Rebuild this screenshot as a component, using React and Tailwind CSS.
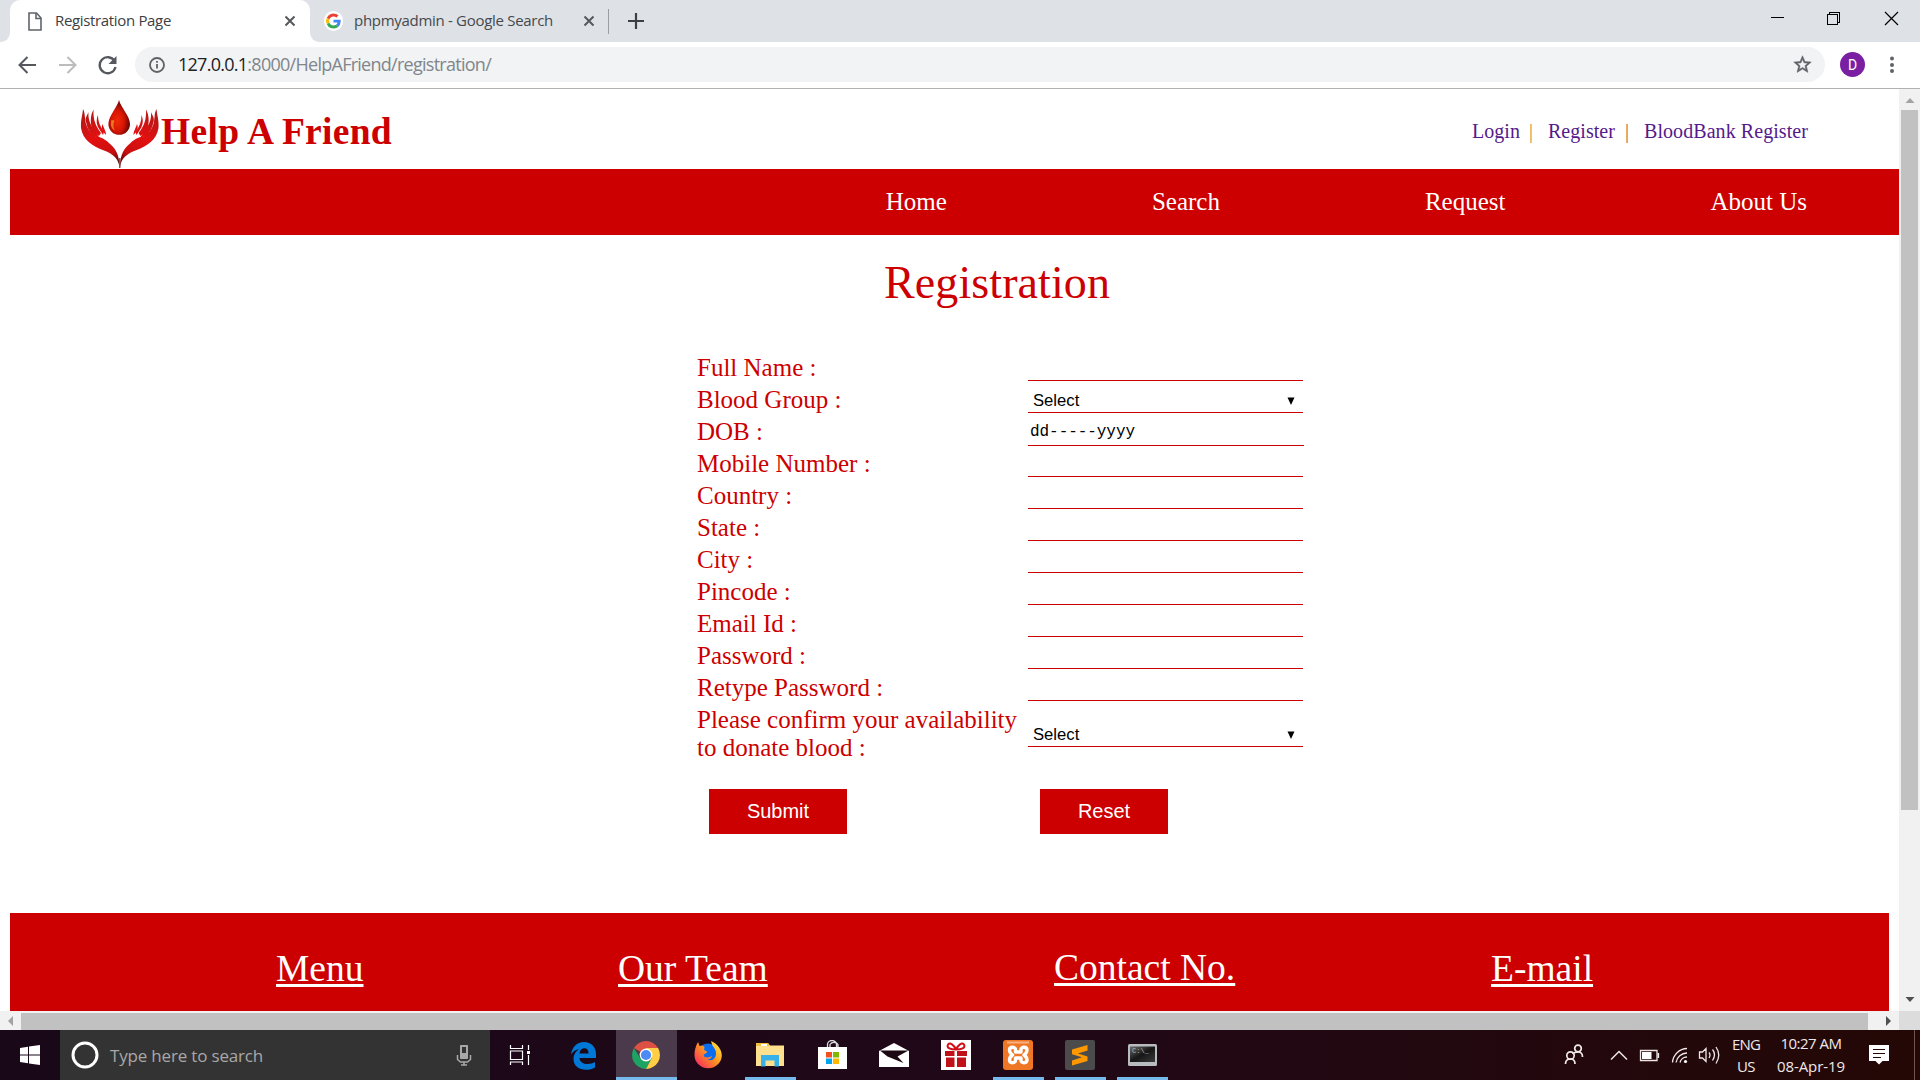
import React from "react";

const RED = "text-[#cc0000]";

function T({ children, w, className = "" }) {
  const ref = React.useRef(null);
  const [ls, setLs] = React.useState(0);
  React.useLayoutEffect(() => {
    const n = ref.current.textContent.length;
    setLs((w - ref.current.getBoundingClientRect().width) / n);
  }, [w]);
  return (
    <span ref={ref} className={"inline-block whitespace-pre " + className} style={{ letterSpacing: ls }}>
      {children}
    </span>
  );
}

function TabX() {
  return (
    <svg width="12" height="12" viewBox="0 0 12 12" className="shrink-0">
      <path d="M1.5 1.5l9 9M10.5 1.5l-9 9" stroke="#55585c" strokeWidth="2" />
    </svg>
  );
}

function GoogleG() {
  return (
    <svg width="19" height="20" viewBox="0 0 48 48" className="shrink-0 rounded-full bg-white p-[2px]">
      <path fill="#EA4335" d="M24 9.5c3.5 0 6.700 1.200 9.200 3.600l6.900-6.900C35.900 2.400 30.500 0 24 0 14.600 0 6.500 5.400 2.600 13.200l8 6.200C12.400 13.700 17.700 9.500 24 9.500z" />
      <path fill="#4285F4" d="M47 24.500c0-1.600-.2-3.100-.4-4.500H24v9h12.900c-.6 3-2.200 5.500-4.700 7.200l7.700 6C44.400 38 47 32.100 47 24.500z" />
      <path fill="#FBBC05" d="M10.500 28.600A14.500 14.500 0 0 1 10.500 19.400l-8-6.200a24 24 0 0 0 0 21.600z" />
      <path fill="#34A853" d="M24 48c6.500 0 11.900-2.100 15.900-5.800l-7.700-6c-2.200 1.500-4.900 2.300-8.200 2.300-6.300 0-11.600-4.200-13.500-9.900l-8 6.200C6.500 42.600 14.600 48 24 48z" />
    </svg>
  );
}

function TabStrip() {
  return (
    <div className="flex h-[42px] bg-[#dee1e6]">
      <div className="w-[10px] bg-white">
        <div className="h-full rounded-br-[9px] bg-[#dee1e6]" />
      </div>
      <div className="flex w-[300px] items-center rounded-t-[10px] bg-white pl-[18px] pr-[14px]">
        <svg width="14" height="19" viewBox="0 0 14 19" fill="none" stroke="#5f6368" strokeWidth="1.6">
          <path d="M1 1h7.500l4.500 5v12H1z" />
          <path d="M8 1v5.500h5" />
        </svg>
        <T w={116} className="mb-[2px] ml-[13px] text-[15px] text-[#3c4043]">Registration Page</T>
        <div className="ml-auto"><TabX /></div>
      </div>
      <div className="w-[10px] bg-white">
        <div className="h-full rounded-bl-[9px] bg-[#dee1e6]" />
      </div>
      <div className="flex items-center pl-[4px]">
        <GoogleG />
        <T w={199} className="mb-[2px] ml-[11px] text-[15px] text-[#45494d]">phpmyadmin - Google Search</T>
        <div className="ml-[30px]"><TabX /></div>
        <div className="ml-[13px] h-[25px] w-px bg-[#9a9da2]" />
        <svg width="16" height="16" viewBox="0 0 16 16" className="ml-[19px]">
          <path d="M8 0v16M0 8h16" stroke="#3c4043" strokeWidth="2.200" />
        </svg>
      </div>
      <div className="ml-auto flex items-start">
        <svg width="150" height="36" viewBox="0 0 150 36" fill="none" stroke="#000" shapeRendering="crispEdges">
          <path d="M1 17.500h13M57.500 14.500h10v10h-10zM59.500 14v-1.500h10v10h-2" />
          <path d="M115 12l13 13M128 12l-13 13" shapeRendering="auto" strokeWidth="1.200" />
        </svg>
      </div>
    </div>
  );
}

function Toolbar() {
  return (
    <div className="flex h-[47px] items-start border-b border-[#b0b1b3] bg-white pt-[5px]">
      <svg width="135" height="35" viewBox="0 0 135 35" fill="none" strokeWidth="2">
        <path d="M36 18H20M27.500 10l-8 8 8 8" stroke="#55595e" />
        <path d="M59 18h16M67.500 10l8 8-8 8" stroke="#babcbe" />
        <path d="M114.500 14A8 8 0 1 0 115.500 20" stroke="#55595e" strokeWidth="2.300" />
        <path d="M116.500 9v8h-8z" fill="#55595e" />
      </svg>
      <div className="flex h-[35px] w-[1690px] items-center rounded-full bg-[#f1f3f4] pl-[14px] pr-[12px]">
        <svg width="16" height="16" viewBox="0 0 16 16" fill="none" stroke="#5f6368" strokeWidth="1.800">
          <circle cx="8" cy="8" r="7" />
          <path d="M8 7v4.500M8 4v1.800" />
        </svg>
        <T w={313} className="ml-[13px] text-[18px] text-[#80868b]"><span className="text-[#202124]">127.0.0.1</span>:8000/HelpAFriend/registration/</T>
        <svg width="21" height="21" viewBox="0 0 24 24" className="ml-auto" fill="#5f6368">
          <path d="M22 9.240l-7.190-.62L12 2 9.190 8.630 2 9.240l5.460 4.730L5.820 21 12 17.270 18.180 21l-1.630-7.030L22 9.240zM12 15.400l-3.760 2.270 1-4.280-3.320-2.880 4.380-.38L12 6.100l1.710 4.040 4.380.38-3.320 2.880 1 4.280L12 15.400z" stroke="#5f6368" strokeWidth=".6" />
        </svg>
      </div>
      <div className="ml-[15px] mt-[5px] flex h-[25px] w-[25px] items-center justify-center rounded-full bg-[#7b1fa2] pt-px font-[Roboto] text-[14px] text-white">D</div>
      <svg width="6" height="20" viewBox="0 0 6 20" className="ml-[24px] mt-[8px]" fill="#5f6368">
        <circle cx="3" cy="3.500" r="2" /><circle cx="3" cy="10" r="2" /><circle cx="3" cy="16" r="2" />
      </svg>
    </div>
  );
}

function Hand() {
  return (
    <g fill="url(#handFill)">
      <path d="M39.500 67C38 58 33 54 24 50.500 12 46 3 40 1 28 .5 20 2.500 15 3 9c2.500 5 1.500 9 3 15 2 6 5 9 9 12 4 1 9 2 14 7 6 5 10.500 11 10.500 24z" />
      <path d="M13.500 9.500C10.500 15 10 22 12 28c1.500 4 4 6 7 8l2-3C15.500 26 13 20 13.500 9.500z" />
      <path d="M18 15c-2 5-1.500 9 .5 13l4.500 7 1-3c-4-6-6-10-6-17z" />
      <path d="M22.500 24c-1.500 4-.5 7 3.500 11 0-4-2-6-3.500-11z" />
      <path d="M6 22c-1.500-4 1.500-7 2.500-10-.5 6 1 12 6 18l5 8-6-2C9 32 7 27 6 22z" />
    </g>
  );
}

function Logo() {
  return (
    <svg width="80" height="69" viewBox="0 0 80 69" className="shrink-0">
      <defs>
        <linearGradient id="handFill" gradientUnits="userSpaceOnUse" x1="4" y1="10" x2="41" y2="64">
          <stop offset="0" stopColor="#b01818" />
          <stop offset=".45" stopColor="#e31010" />
          <stop offset=".78" stopColor="#c90f0f" />
          <stop offset="1" stopColor="#3a0505" />
        </linearGradient>
        <radialGradient id="dropFill" cx=".42" cy=".6" r=".6">
          <stop offset="0" stopColor="#f02a06" />
          <stop offset=".5" stopColor="#d81505" />
          <stop offset="1" stopColor="#5c0300" />
        </radialGradient>
      </defs>
      <Hand />
      <g transform="translate(79.500 0) scale(-1 1)"><Hand /></g>
      <path d="M39.800 58v10" stroke="#8a2020" strokeWidth="1.200" />
      <path d="M39 0C40.500 7 50 16 50 24a10.800 10.800 0 0 1-21.600 0C28.400 16 37.500 7 39 0z" fill="url(#dropFill)" />
      <path d="M31.500 20c-1.500 5 0 9 3.500 10.500-2-3-2-6-.5-10z" fill="#f0a030" opacity=".7" />
    </svg>
  );
}

function SiteHeader() {
  return (
    <div className="flex h-[80px] shrink-0 items-start pl-[80px] pt-[11px]">
      <Logo />
      <h1 className={"ml-px mt-[11px] text-[37.5px] font-bold leading-[42px] " + RED}><T w={231}>Help A Friend</T></h1>
      <div className="ml-auto mr-[91px] mt-[20px] flex text-[20px] leading-[22px] text-[#551a8b]">
        <T w={48}>Login</T>
        <span className="ml-[9px] text-[#cc8a3c]">|</span>
        <T w={67} className="ml-[15px]">Register</T>
        <span className="ml-[10px] text-[#a06a40]">|</span>
        <T w={164} className="ml-[15px]">BloodBank Register</T>
      </div>
    </div>
  );
}

function NavBar() {
  return (
    <div className="ml-[10px] flex h-[66px] shrink-0 items-center justify-end bg-[#cc0000] pr-[92px] text-[25px] leading-[28px] text-white">
      <span className="mr-[205px]">Home</span>
      <span className="mr-[205px]">Search</span>
      <span className="mr-[205px]">Request</span>
      <span>About Us</span>
    </div>
  );
}

const ROWS = [
  ["Full Name :"],
  ["Blood Group :", "select"],
  ["DOB :", "date"],
  ["Mobile Number :"],
  ["Country :"],
  ["State :"],
  ["City :"],
  ["Pincode :"],
  ["Email Id :"],
  ["Password :"],
  ["Retype Password :"],
];

function SelectBox({ className = "" }) {
  return (
    <div className={"flex h-[25px] w-[275px] items-center border-b border-[#cc0000] pl-[5px] pr-[8px] font-['Liberation_Sans'] text-[16.67px] leading-[19px] text-black " + className}>
      <span>Select</span>
      <svg width="8" height="8" viewBox="0 0 8 8" className="ml-auto mt-[2px]"><path d="M0.500 0.500h7L4 8z" fill="#000" /></svg>
    </div>
  );
}

function Field({ kind }) {
  if (kind === "select") return <SelectBox className="mt-[6px]" />;
  if (kind === "date")
    return (
      <div className="mt-[6px] flex h-[26px] w-[276px] items-center border-b border-[#cc0000] pl-[2px] text-black">
        <T w={105} className="font-['Liberation_Mono'] text-[16px] leading-[19px]">dd-----yyyy</T>
      </div>
    );
  return <div className="mt-[6px] h-[25px] w-[275px] border-b border-[#cc0000]" />;
}

function Form() {
  return (
    <div className="mt-[41px] flex w-[607px] flex-col">
      {ROWS.map(([label, kind]) => (
        <div key={label} className="flex h-[32px] items-start">
          <div className={"w-[331px] pt-[4px] text-[25px] leading-[28px] " + RED}>{label}</div>
          <Field kind={kind} />
        </div>
      ))}
      <div className="flex items-start">
        <div className={"w-[331px] whitespace-pre pt-[4px] text-[25px] leading-[28px] " + RED}>{"Please confirm your availability\nto donate blood :"}</div>
        <SelectBox className="mt-[20px]" />
      </div>
      <div className="mt-[27px] flex font-['Liberation_Sans'] text-[20px] text-white">
        <button className="ml-[12px] h-[45px] w-[138px] bg-[#cc0000] pb-px">Submit</button>
        <button className="ml-[193px] h-[45px] w-[128px] bg-[#cc0000] pb-px">Reset</button>
      </div>
    </div>
  );
}

function Footer() {
  return (
    <div className="ml-[10px] mr-[10px] mt-auto flex h-[98px] shrink-0 bg-[#cc0000] pt-[35px] text-[37.5px] leading-[42px] text-white underline decoration-[3px] underline-offset-[3px]">
      <span className="ml-[266px] w-[342px]">Menu</span>
      <span className="w-[436px]">Our Team</span>
      <span className="-mt-px w-[437px]">Contact No.</span>
      <span>E-mail</span>
    </div>
  );
}

function Arrow({ d, fill }) {
  return <svg width="10" height="10" viewBox="0 0 10 10"><path d={d} fill={fill} /></svg>;
}

function Viewport() {
  return (
    <div className="flex h-[941px]">
      <div className="flex w-[1899px] flex-col">
        <div className="flex h-[922px] flex-col bg-white font-['Liberation_Serif']">
          <SiteHeader />
          <NavBar />
          <div className="flex flex-col pl-[697px]">
            <h2 className={"ml-[187px] mt-[22px] text-[46px] leading-[52px] " + RED}><T w={226}>Registration</T></h2>
            <Form />
          </div>
          <Footer />
        </div>
        <div className="flex h-[19px] items-center bg-[#f1f1f1]">
          <div className="flex w-[21px] justify-center"><Arrow d="M7 0v10L2 5z" fill="#a3a3a3" /></div>
          <div className="mt-[2px] h-[17px] w-[1847px] bg-[#c1c1c1]" />
          <div className="flex w-[31px] justify-end pr-[6px]"><Arrow d="M3 0v10l5-5z" fill="#505050" /></div>
        </div>
      </div>
      <div className="flex w-[21px] flex-col items-center bg-[#f1f1f1]">
        <div className="flex h-[21px] items-center pt-[2px]"><Arrow d="M0.500 7h9L5 2z" fill="#a3a3a3" /></div>
        <div className="h-[700px] w-[17px] bg-[#c1c1c1]" />
        <div className="mt-auto flex h-[21px] items-center pb-[4px]"><Arrow d="M0.500 3h9L5 8z" fill="#505050" /></div>
        <div className="h-[19px] w-full bg-[#dcdcdc]" />
      </div>
    </div>
  );
}

function TaskItem({ children, active, open }) {
  return (
    <div className={"mr-px flex h-full w-[61px] flex-col items-center " + (active ? "bg-[#4b3a4b]" : "")}>
      <div className="flex h-[47px] w-full items-center justify-center pr-px pt-[2px]">{children}</div>
      <div className={"h-[3px] " + (active ? "w-full bg-[#76b9ed]" : open ? "w-[51px] bg-[#76b9ed]" : "")} />
    </div>
  );
}

function Taskbar() {
  return (
    <div className="flex h-[50px] bg-gradient-to-r from-[#180818] via-[#200818] to-[#240806] font-['Open_Sans']">
      <div className="flex w-[60px] items-center justify-center">
        <svg width="20" height="20" viewBox="0 0 20 20" fill="#fff">
          <path d="M0 3l8-1.200v7.700H0zM9 1.600L20 0v9.500H9zM0 10.500h8v7.700L0 17zM9 10.500h11V20L9 18.400z" />
        </svg>
      </div>
      <div className="flex w-[430px] items-center bg-[#333333] pl-[11px] pr-[18px]">
        <svg width="28" height="28" viewBox="0 0 28 28"><circle cx="14" cy="14" r="12" fill="none" stroke="#fff" strokeWidth="3" /></svg>
        <T w={153} className="ml-[11px] mt-px text-[17px] text-[#a8a8a8]">Type here to search</T>
        <svg width="16" height="21" viewBox="0 0 16 21" className="ml-auto" fill="none" stroke="#a8a8a8">
          <path d="M4.500 .5h7v13h-7z" fill="#a8a8a8" /><path d="M6 2h4v6H6z" fill="#333" stroke="none" />
          <path d="M1.500 10v4.500l3 2.500h7l3-2.500V10M8 17v3M5 20h6" strokeWidth="1.500" />
        </svg>
      </div>
      <div className="flex w-[60px] items-center justify-center pb-px">
        <svg width="22" height="20" viewBox="0 0 22 20" fill="none" stroke="#fff" strokeWidth="1.200">
          <path d="M1.500 0v3.500h12V0M1.500 6h12v8.500h-12zM1.500 20v-3h12v3M19.500 0v5M19.500 10v10" /><path d="M18 6h3v3h-3z" fill="#fff" stroke="none" />
        </svg>
      </div>
      <div className="flex w-[66px] items-center justify-center pt-px">
        <svg width="25" height="28" viewBox="0 0 25 28" fill="#0078d7">
          <path d="M0 12.500C1 5 6 0 13 0c7.500 0 12 5.500 12 12v4H8.500c.2 4 4 6 8 6 3 0 5.500-.8 7.500-2v5.500c-2.500 1.500-5.500 2.300-9 2.300C8 27.800 2.500 24 2.500 17c0-4.500 2.500-8 6-10C4.500 7.500 2 9.500 0 12.500zM8.600 11.500h9c0-3.500-1.700-5.300-4.300-5.300-2.700 0-4.500 2.200-4.700 5.300z" />
        </svg>
      </div>
      <TaskItem active>
        <svg width="28" height="28" viewBox="0 0 28 28">
          <path d="M14 14L1.900 7a14 14 0 0 1 24.200 0z" fill="#dd5144" />
          <path d="M1.900 7A14 14 0 0 0 14 28l5.500-10.500H8.500z" fill="#1da462" />
          <path d="M14 28A14 14 0 0 0 26.100 7H14l5.800 10z" fill="#ffcd46" />
          <circle cx="14" cy="14" r="6.400" fill="#fff" /><circle cx="14" cy="14" r="5.100" fill="#4c8bf5" />
        </svg>
      </TaskItem>
      <TaskItem>
        <svg width="28" height="28" viewBox="0 0 28 28">
          <defs>
            <linearGradient id="fox" x1="1" y1="0" x2="0" y2="1"><stop offset="0" stopColor="#fff44f" /><stop offset=".45" stopColor="#ff9a1c" /><stop offset="1" stopColor="#f5156c" /></linearGradient>
          </defs>
          <circle cx="14" cy="13" r="10.500" fill="#0a6cf0" />
          <path d="M17 0c7 3 11 9 10.800 15A13.700 13.500 0 0 1 .5 15C.3 10 1.500 5 4 1l1.500 4 3-.5 2 1.500-.5 3 3 1.500c0 2-2 2-3.500 3l1 2.500c3 1 6 .5 7.500-1.500-.5 3-3 4-5 4 5 2.500 9-1 9-6 0-4-2.500-6-3.500-8C18 3 17.500 2 17 0z" fill="url(#fox)" />
        </svg>
      </TaskItem>
      <TaskItem open>
        <svg width="28" height="24" viewBox="0 0 28 24">
          <path d="M0 0h12l2 2.500h14V23H0z" fill="#ffe08f" /><path d="M0 0h12l1.500 3H0z" fill="#f0bd3c" /><path d="M5 1h6v2H5z" fill="#fff" />
          <path d="M5 12h18v11.500h-4.500V17.500h-9v6H5z" fill="#38b0e8" />
        </svg>
      </TaskItem>
      <TaskItem>
        <svg width="29" height="29" viewBox="0 0 29 29">
          <path d="M9.500 8V4.500a4.500 4 0 0 1 9 0V8M12 8V4.500a4.500 4 0 0 1 8 0V8" fill="none" stroke="#ddd" strokeWidth="1.300" />
          <path d="M0 7h29v22H0z" fill="#fff" />
          <path d="M8 12h6v5.500H8z" fill="#f25022" /><path d="M15 12h6v5.500h-6z" fill="#7fba00" /><path d="M8 18.500h6V24H8z" fill="#00a4ef" /><path d="M15 18.500h6V24h-6z" fill="#ffb900" />
        </svg>
      </TaskItem>
      <TaskItem>
        <svg width="30" height="24" viewBox="0 0 30 24"><path d="M0 8L15 0l15 8v16H0z" fill="#fff" /><path d="M1 7.500h28.500L18.500 13.500l6 6.500L8.500 13.500z" fill="#1c0812" /></svg>
      </TaskItem>
      <TaskItem>
        <svg width="30" height="30" viewBox="0 0 30 30">
          <path d="M0 0h30v30H0z" fill="#fff" />
          <path d="M4 11h9.500v5H4zM16 11h10v5H16zM5 17.500h8.500V27H5zM16 17.500h9V27h-9z" fill="#c01018" />
          <path d="M15 9.500C10 9.500 5 8 7 4.500 9 2 13 5 15 9.500zm0 0c5 0 10-1.500 8-5C21 2 17 5 15 9.500z" fill="none" stroke="#d01018" strokeWidth="2" />
        </svg>
      </TaskItem>
      <TaskItem open>
        <svg width="30" height="30" viewBox="0 0 30 30">
          <rect width="30" height="30" rx="3" fill="#ee7624" /><path d="M4 1.500h22v2H4z" fill="#f9b080" />
          <path d="M12.500 12V9.500c0-3-6-3-6 .5 0 2.500 1.500 4 3 5-1.500 1-3 2.500-3 5 0 3.500 6 3.500 6 .5V18h5.500v2.500c0 3 6 3 6-.5 0-2.500-1.500-4-3-5 1.500-1 3-2.500 3-5 0-3.500-6-3.500-6-.5V12z" fill="none" stroke="#fff" strokeWidth="3.400" strokeLinejoin="round" />
        </svg>
      </TaskItem>
      <TaskItem open>
        <svg width="30" height="30" viewBox="0 0 30 30">
          <rect width="30" height="30" rx="2" fill="#4b4b4b" />
          <path d="M22.500 5v5.500L13 13.500l9.500 3V21L7 25.500v-5l10-3.200-10-3.100V9.500z" fill="#ff9800" />
        </svg>
      </TaskItem>
      <TaskItem open>
        <svg width="29" height="22" viewBox="0 0 29 22">
          <defs><linearGradient id="term" x2="1" y2="1"><stop offset="0" stopColor="#6a6a6a" /><stop offset=".5" stopColor="#161616" /><stop offset="1" stopColor="#3a3a3a" /></linearGradient></defs>
          <rect width="29" height="22" rx="1.500" fill="#b9bcbe" /><path d="M2 2.500h25V18H2z" fill="url(#term)" />
          <text x="4" y="9" fontSize="7" fill="#bbb" fontFamily="Liberation Mono">C:\_</text>
        </svg>
      </TaskItem>
      <div className="ml-auto flex text-[#f0e8e8]">
        <svg width="162" height="50" viewBox="1558 0 162 50" fill="none" stroke="#f0e8e8" strokeWidth="1.700">
          <circle cx="1578" cy="18.500" r="3.300" /><path d="M1572.500 24c1.500-1.500 3-2 5.500-2 3 0 4.500 2 4.500 5" />
          <circle cx="1570.500" cy="25.500" r="3.700" /><path d="M1565.500 34c0-3 2-5 5-5s4.500 2 4.500 5" />
          <path d="M1611 29.500l8-8 8 8" strokeWidth="1.500" />
          <path d="M1640.500 20.500h16.500v10h-16.500zM1658.500 23v5" strokeWidth="1.300" /><path d="M1642 22h9.500v7h-9.500z" fill="#fff" stroke="none" />
          <g strokeWidth="1.300"><path d="M1672.500 32.500a15 15 0 0 1 14.500-14M1676 32.500a11 11 0 0 1 11-9.500M1680 32.500a7 7 0 0 1 7-5.500" /></g>
          <circle cx="1685.500" cy="31.500" r="1.600" fill="#fff" stroke="none" />
          <path d="M1699.500 22h3l3.500-3.500v13l-3.500-3.500h-3zM1709 22.500q2 2.500 0 5.500M1712.500 19.500q4 5 0 11M1716 17q5.500 8 0 16.500" strokeWidth="1.300" />
        </svg>
        <div className="flex w-[52px] flex-col items-center pt-[3px] text-[15px] leading-[22px]"><T w={28}>ENG</T><T w={18}>US</T></div>
        <div className="ml-[2px] flex w-[74px] flex-col items-center pt-[2px] text-[15px] leading-[22.500px]"><T w={61}>10:27 AM</T><T w={68}>08-Apr-19</T></div>
        <svg width="72" height="50" viewBox="1848 0 72 50">
          <path d="M1869 15h20v16h-6.500l-3.500 3.500-3.500-3.500h-6.500z" fill="#fff" /><path d="M1873 19.500h12M1873 23.500h12M1873 27.500h8" stroke="#240806" strokeWidth="1.200" />
          <path d="M1914.500 0v50" stroke="#6b5655" />
        </svg>
      </div>
    </div>
  );
}

export default function App() {
  return (
    <div className="h-[1080px] w-[1920px] overflow-hidden bg-white font-['Open_Sans',sans-serif]">
      <TabStrip />
      <Toolbar />
      <Viewport />
      <Taskbar />
    </div>
  );
}
